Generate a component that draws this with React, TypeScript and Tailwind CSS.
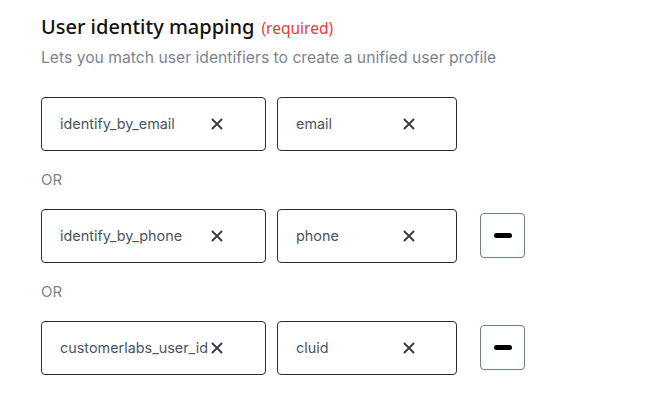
import React from "react"

type Pair = { key: string; value: string; removable: boolean }

const pairs: Pair[] = [
  { key: "identify_by_email", value: "email", removable: false },
  { key: "identify_by_phone", value: "phone", removable: true },
  { key: "customerlabs_user_id", value: "cluid", removable: true },
]

const XIcon = () => (
  <svg width="12" height="12" viewBox="0 0 12 12" className="shrink-0 text-[#3a3f47]">
    <path d="M1.5 1.5 L10.5 10.5 M10.5 1.5 L1.5 10.5" stroke="currentColor" strokeWidth="2" strokeLinecap="round" />
  </svg>
)

const Field = ({ text, width, textWidth }: { text: string; width: string; textWidth: string }) => (
  <div className={`flex h-[54px] items-center rounded-[4px] border border-[#2a2a2a] pl-[18px] ${width}`}>
    <span className={`shrink-0 whitespace-nowrap text-[14.4px] text-[#4b5563] ${textWidth}`}>{text}</span>
    <XIcon />
  </div>
)

export default function App() {
  return (
    <div className="min-h-screen bg-white pl-[41px] pt-[12px]" style={{ fontFamily: "Inter, 'Noto Sans', sans-serif" }}>
      <div className="flex items-baseline gap-[7px]">
        <h2 className="text-[20px] font-medium text-[#111111]" style={{ fontFamily: "'Noto Sans', sans-serif" }}>
          User identity mapping
        </h2>
        <span className="text-[15.5px] text-[#ef3a3a]" style={{ fontFamily: "'Noto Sans', sans-serif" }}>
          (required)
        </span>
      </div>
      <p className="mt-[4px] text-[15.7px] text-[#7b8591]">Lets you match user identifiers to create a unified user profile</p>

      <div className="mt-[27px] flex flex-col">
        {pairs.map((p, i) => (
          <div key={p.key}>
            {i > 0 && <div className="py-[17px] text-[15px] leading-[24px] text-[#7b8591]">OR</div>}
            <div className="flex items-center">
              <Field text={p.key} width="w-[225px]" textWidth="w-[151px]" />
              <div className="w-[11px]" />
              <Field text={p.value} width="w-[180px]" textWidth="w-[107px]" />
              {p.removable && (
                <button className="ml-[23px] flex h-[45px] w-[45px] items-center justify-center rounded-[4px] border border-[#6b7d90] bg-white">
                  <span className="block h-[5px] w-[18px] rounded-full bg-black" />
                </button>
              )}
            </div>
          </div>
        ))}
      </div>
    </div>
  )
}
